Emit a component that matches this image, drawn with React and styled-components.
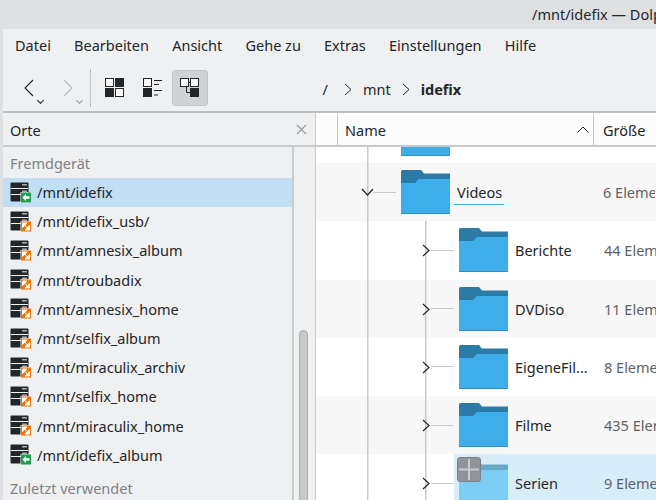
import React from "react";
import styled, { createGlobalStyle } from "styled-components";

const GlobalStyle = createGlobalStyle`
  html, body {
    margin: 0;
    padding: 0;
    width: 656px;
    height: 500px;
    overflow: hidden;
    background: #eff0f1;
    font-family: "Noto Sans", sans-serif;
    color: #232629;
  }
`;

const places = [
  { name: "/mnt/idefix", mounted: true, active: true },
  { name: "/mnt/idefix_usb/" },
  { name: "/mnt/amnesix_album" },
  { name: "/mnt/troubadix" },
  { name: "/mnt/amnesix_home" },
  { name: "/mnt/selfix_album" },
  { name: "/mnt/miraculix_archiv" },
  { name: "/mnt/selfix_home" },
  { name: "/mnt/miraculix_home" },
  { name: "/mnt/idefix_album", mounted: true },
];

const children = [
  { name: "Berichte", size: "44 Elemente" },
  { name: "DVDiso", size: "11 Elemente", alt: true },
  { name: "EigeneFil...", size: "8 Elemente" },
  { name: "Filme", size: "435 Elemente", alt: true },
  { name: "Serien", size: "9 Elemente", selected: true },
];

const menus = ["Datei", "Bearbeiten", "Ansicht", "Gehe zu", "Extras", "Einstellungen", "Hilfe"];

const FolderIcon = ({ light }) => (
  <FolderSvg viewBox="0 0 49 44">
    <path
      d="M1 0H20L23 3.5H49V20H0V1Z"
      fill={light ? "#6aa8c8" : "#2c7aa6"}
    />
    <path
      d="M0 13H14L18 9H49V43.5H0Z"
      fill={light ? "#7dcef5" : "#3daee9"}
    />
    <rect y="43" width="49" height="1" fill={light ? "#6cbde4" : "#2f8fc4"} />
  </FolderSvg>
);

const DeviceIcon = ({ mounted }) => (
  <svg width="21" height="21" viewBox="0 0 21 21">
    <rect x="0.5" y="0.5" width="18" height="19" rx="1" fill="#232629" />
    <rect x="1" y="6" width="17" height="1" fill="#eff0f1" />
    <rect x="1" y="12" width="17" height="1" fill="#eff0f1" />
    <rect x="12" y="2" width="5" height="1.5" fill="#a9abad" />
    <rect x="12" y="8.5" width="5" height="1.5" fill="#a9abad" />
    <rect x="10.5" y="10" width="10.5" height="11" fill="#eff0f1" />
    <rect x="11" y="10.5" width="10" height="10" fill={mounted ? "#1f9d55" : "#f67400"} />
    {mounted ? (
      <path d="M12.5 15.5L16 12V14.2H19.5V16.8H16V19Z" fill="#fff" />
    ) : (
      <path
        d="M12.5 12H17L12.5 16.5ZM19.5 19H15L19.5 14.5ZM14 13.5L18 17.5"
        fill="#fff"
        stroke="#fff"
        strokeWidth="1"
      />
    )}
  </svg>
);

const Chevron = ({ dir = "right", size = 10, color = "#232629" }) => {
  const d = {
    right: "M1 1L9 9L1 17",
    left: "M9 1L1 9L9 17",
  }[dir];
  return (
    <svg width={size} height={size * 1.8} viewBox="0 0 10 18" fill="none" stroke={color} strokeWidth="1.1">
      <path d={d} />
    </svg>
  );
};

const CrumbChevron = () => (
  <CrumbArrow>
    <svg width="8" height="13" viewBox="0 0 8 13" fill="none" stroke="#232629" strokeWidth="1">
      <path d="M1 1L7 6.5L1 12" />
    </svg>
  </CrumbArrow>
);

const TreeRow = ({ item }) => (
  <Row $alt={item.alt}>
    <Guide />
    <Guide $branch>
      <Expander>
        <svg width="8" height="13" viewBox="0 0 8 13" fill="none" stroke="#232629" strokeWidth="1.2">
          <path d="M1 1L7 6.5L1 12" />
        </svg>
      </Expander>
    </Guide>
    <Cell $selected={item.selected}>
      {item.selected && (
        <SelectToggle>
          <svg width="22" height="23" viewBox="0 0 22 23">
            <path d="M11 1V22M1 11.5H21" stroke="#c9ccd0" strokeWidth="2" />
          </svg>
        </SelectToggle>
      )}
      <FolderIcon light={item.selected} />
      <Label>{item.name}</Label>
      <Size>{item.size}</Size>
    </Cell>
  </Row>
);

export default function App() {
  return (
    <>
      <GlobalStyle />
      <Window>
        <TitleBar>
          <svg width="21" height="20" viewBox="0 0 21 20">
            <defs>
              <linearGradient id="appFolder" x1="0" y1="0" x2="0" y2="1">
                <stop offset="0" stopColor="#3daee9" />
                <stop offset="1" stopColor="#2a8ac2" />
              </linearGradient>
            </defs>
            <path d="M0 0.5H8L10 2H21V20H0Z" fill="#1f6f9e" />
            <rect x="1" y="3.5" width="13" height="3.5" fill="#fff" />
            <path d="M0 9H9L11 7H21V20H0Z" fill="url(#appFolder)" />
          </svg>
          <svg width="14" height="14" viewBox="0 0 14 14">
            <path d="M8.5 0.5L13.5 5.5L12.5 6.5L11.5 6L8.5 9L8.5 11.5L7 12.5L1.5 7L2.5 5.5L5 5.5L8 2.5L7.5 1.5Z" fill="#232629" />
            <path d="M4 9.5L0.5 13.5L4.5 10Z" fill="#232629" stroke="#232629" strokeWidth="0.8" />
          </svg>
          <Title>/mnt/idefix — Dolphin</Title>
        </TitleBar>
        <Frame>
          <MenuBar>
            {menus.map((m) => (
              <MenuItem key={m}>{m}</MenuItem>
            ))}
          </MenuBar>
          <Toolbar>
            <NavButton>
              <Chevron dir="left" />
              <DropMark />
            </NavButton>
            <NavButton $short>
              <Chevron dir="right" color="#b3b5b7" />
              <DropMark $off />
            </NavButton>
            <Separator />
            <ViewButton>
              <svg width="20" height="20" viewBox="0 0 20 20" fill="#232629" stroke="#232629" strokeWidth="1">
                <rect x="0.5" y="0.5" width="8" height="8" fill="#fcfcfc" />
                <rect x="10.5" y="0.5" width="8" height="8" />
                <rect x="0.5" y="10.5" width="8" height="8" />
                <rect x="10.5" y="10.5" width="8" height="8" fill="#fcfcfc" />
              </svg>
            </ViewButton>
            <ViewButton>
              <svg width="20" height="20" viewBox="0 0 20 20" fill="#232629" stroke="#232629" strokeWidth="1">
                <rect x="0.5" y="0.5" width="8" height="8" fill="#fcfcfc" />
                <rect x="0.5" y="10.5" width="8" height="8" />
                <path d="M11 2.5H19M11 6.5H16M11 12.5H19M11 17H15" fill="none" />
              </svg>
            </ViewButton>
            <ViewButton $active>
              <svg width="20" height="20" viewBox="0 0 20 20" fill="#232629" stroke="#232629" strokeWidth="1">
                <rect x="0.5" y="0.5" width="8" height="8" fill="#fcfcfc" />
                <rect x="10.5" y="0.5" width="8" height="8" fill="#fcfcfc" />
                <rect x="10.5" y="10.5" width="8" height="8" />
                <path d="M8.5 4.5H10.5M6.5 8.5V14.5H10.5" fill="none" />
              </svg>
            </ViewButton>
            <Breadcrumbs>
              <Crumb $root>/</Crumb>
              <CrumbChevron />
              <Crumb>mnt</Crumb>
              <CrumbChevron />
              <Crumb $bold>idefix</Crumb>
            </Breadcrumbs>
          </Toolbar>
          <Content>
            <Sidebar>
              <PanelHeader>
                <span>Orte</span>
                <svg width="11" height="11" viewBox="0 0 11 11" stroke="#9a9c9e" strokeWidth="1.1">
                  <path d="M1 1L10 10M10 1L1 10" />
                </svg>
              </PanelHeader>
              <PanelBody>
                <PlacesList>
                  <Group>Fremdgerät</Group>
                  {places.map((p) => (
                    <Place key={p.name} $active={p.active}>
                      <DeviceIcon mounted={p.mounted} />
                      <span>{p.name}</span>
                    </Place>
                  ))}
                  <Group $recent>Zuletzt verwendet</Group>
                </PlacesList>
                <ScrollTrack>
                  <ScrollThumb />
                </ScrollTrack>
              </PanelBody>
            </Sidebar>
            <Main>
              <ColumnHeader>
                <HeaderGap />
                <NameHead>
                  <span>Name</span>
                  <svg width="12" height="7" viewBox="0 0 12 7" fill="none" stroke="#232629" strokeWidth="1">
                    <path d="M0.5 6.5L6 1L11.5 6.5" />
                  </svg>
                </NameHead>
                <SizeHead>Größe</SizeHead>
              </ColumnHeader>
              <TopRow>
                <Guide />
                <FolderStub />
              </TopRow>
              <Row $alt>
                <Guide $branch>
                  <Expander $down>
                    <svg width="13" height="8" viewBox="0 0 13 8" fill="none" stroke="#232629" strokeWidth="1.2">
                      <path d="M1 1L6.5 7L12 1" />
                    </svg>
                  </Expander>
                </Guide>
                <Cell>
                  <FolderIcon />
                  <Label $current>Videos</Label>
                  <Size>6 Elemente</Size>
                </Cell>
              </Row>
              {children.map((c) => (
                <TreeRow key={c.name} item={c} />
              ))}
            </Main>
          </Content>
        </Frame>
      </Window>
    </>
  );
}

const Window = styled.div`
  width: 656px;
  height: 500px;
  overflow: hidden;
  display: flex;
  flex-direction: column;
  font-size: 14.5px;
`;

const TitleBar = styled.div`
  flex: 0 0 29px;
  background: #dee0e2;
  display: flex;
  align-items: center;
  gap: 11px;
  padding-left: 9px;
  white-space: nowrap;
  box-sizing: border-box;
  padding-bottom: 2px;
`;

const Title = styled.div`
  margin-left: 501px;
  font-size: 14.5px;
`;

const Frame = styled.div`
  flex: 1;
  min-height: 0;
  display: flex;
  flex-direction: column;
  border-left: 3px solid #dee0e2;
`;

const MenuBar = styled.div`
  flex: 0 0 33px;
  box-sizing: border-box;
  display: flex;
  align-items: center;
  gap: 23.2px;
  padding: 0 0 2px 12px;
  white-space: nowrap;
`;

const MenuItem = styled.div``;

const Toolbar = styled.div`
  flex: 0 0 51px;
  box-sizing: border-box;
  display: flex;
  align-items: center;
  border-bottom: 2px solid #bdbfc1;
  padding: 3px 0 0 21px;
`;

const NavButton = styled.div`
  width: ${(p) => (p.$short ? "27px" : "39px")};
  height: 36px;
  display: flex;
  align-items: center;
  position: relative;
`;

const DropMark = styled.div`
  position: absolute;
  left: 14px;
  bottom: 3px;
  width: 4px;
  height: 4px;
  border-right: 1px solid ${(p) => (p.$off ? "#9a9c9e" : "#232629")};
  border-bottom: 1px solid ${(p) => (p.$off ? "#9a9c9e" : "#232629")};
  transform: rotate(45deg);
`;

const Separator = styled.div`
  width: 1px;
  height: 38px;
  background: #bdbfc1;
  margin: 0 6px 0 0;
`;

const ViewButton = styled.div`
  width: 36px;
  height: 36px;
  box-sizing: border-box;
  margin-right: 1.5px;
  display: flex;
  align-items: center;
  justify-content: center;
  border-radius: 3px;
  background: ${(p) => (p.$active ? "#d1d2d4" : "transparent")};
  border: 1px solid ${(p) => (p.$active ? "#c3c5c7" : "transparent")};
`;

const Breadcrumbs = styled.div`
  display: flex;
  align-items: center;
  margin-left: 113px;
  padding-top: 2px;
  white-space: nowrap;
`;

const Crumb = styled.span`
  font-weight: ${(p) => (p.$bold ? 700 : 400)};
  margin-right: ${(p) => (p.$root ? "5px" : "0")};
`;

const CrumbArrow = styled.span`
  display: flex;
  margin: 0 11px;
`;

const Content = styled.div`
  flex: 1;
  min-height: 0;
  display: flex;
`;

const Sidebar = styled.div`
  flex: 0 0 313px;
  display: flex;
  flex-direction: column;
  border-right: 1px solid #c8cacc;
  box-sizing: border-box;
`;

const PanelHeader = styled.div`
  flex: 0 0 34px;
  box-sizing: border-box;
  display: flex;
  align-items: center;
  justify-content: space-between;
  padding: 1px 8px 0 7px;
  border-bottom: 2px solid #c8cacc;
`;

const PanelBody = styled.div`
  flex: 1;
  min-height: 0;
  display: flex;
`;

const PlacesList = styled.div`
  flex: 0 0 289px;
  padding-top: 3px;
`;

const Group = styled.div`
  height: 28px;
  box-sizing: border-box;
  display: flex;
  align-items: center;
  padding: 0 0 3px 7px;
  color: #7f8285;
  margin-top: ${(p) => (p.$recent ? "6px" : "0")};
`;

const Place = styled.div`
  height: 29.2px;
  box-sizing: border-box;
  display: flex;
  align-items: center;
  gap: 6px;
  padding: 0 0 1px 7px;
  background: ${(p) => (p.$active ? "#c0dff5" : "transparent")};
`;

const ScrollTrack = styled.div`
  flex: 1;
  border-left: 2px solid #c8cacc;
  padding: 183px 6px 0 5px;
`;

const ScrollThumb = styled.div`
  width: 9px;
  height: 200px;
  box-sizing: border-box;
  background: #c8c9c9;
  border: 1px solid #a9abad;
  border-radius: 5px 5px 0 0;
`;

const Main = styled.div`
  flex: 1;
  min-width: 0;
  background: #fff;
  display: flex;
  flex-direction: column;
`;

const ColumnHeader = styled.div`
  flex: 0 0 34px;
  box-sizing: border-box;
  display: flex;
  align-items: stretch;
  background: #fcfcfc;
  border-bottom: 2px solid #c8cacc;
  padding-top: 1px;
`;

const HeaderGap = styled.div`
  width: 21px;
`;

const NameHead = styled.div`
  width: 257px;
  box-sizing: border-box;
  display: flex;
  align-items: center;
  justify-content: space-between;
  padding: 0 4px 0 7px;
  border-left: 1px solid #c8cacc;
  border-right: 1px solid #c8cacc;
`;

const SizeHead = styled.div`
  display: flex;
  align-items: center;
  padding-left: 9px;
`;

const TopRow = styled.div`
  flex: 0 0 16px;
  display: flex;
`;

const FolderStub = styled.div`
  width: 49px;
  height: 9px;
  margin-left: 27px;
  background: #3daee9;
  border-bottom: 1px solid #2f8fc4;
  box-sizing: border-box;
`;

const Row = styled.div`
  flex: 0 0 58.25px;
  display: flex;
  background: ${(p) => (p.$alt ? "#f7f7f7" : "#fff")};
`;

const Guide = styled.div`
  flex: 0 0 ${(p) => (p.$branch ? "80px" : "58px")};
  position: relative;
  background-repeat: no-repeat;
  background-image: linear-gradient(#c8cacc, #c8cacc)
    ${(p) => (p.$branch ? ", linear-gradient(#c8cacc, #c8cacc)" : "")};
  background-size: 1.5px 100% ${(p) => (p.$branch ? ", 23px 1px" : "")};
  background-position: 50.5px 0 ${(p) => (p.$branch ? ", 57px 50%" : "")};
`;

const Expander = styled.div`
  position: absolute;
  left: ${(p) => (p.$down ? "44.5px" : "48px")};
  top: ${(p) => (p.$down ? "25px" : "23px")};
  display: flex;
`;

const Cell = styled.div`
  flex: 1;
  min-width: 0;
  display: flex;
  align-items: center;
  padding-left: 5px;
  position: relative;
  background: ${(p) => (p.$selected ? "#d8edfa" : "transparent")};
`;

const FolderSvg = styled.svg`
  flex: 0 0 49px;
  width: 49px;
  height: 44px;
`;

const Label = styled.div`
  flex: 1;
  white-space: nowrap;
  padding-left: 7px;
  ${(p) =>
    p.$current &&
    `
    flex: 0 0 50px;
    padding-left: 3px;
    margin-left: 4px;
    line-height: 23px;
    border-bottom: 1px solid #3daee9;
    box-sizing: border-box;
    margin-right: 99px;
    margin-top: 2px;
  `}
`;

const Size = styled.div`
  flex: 0 0 52px;
  overflow: hidden;
  white-space: nowrap;
  color: #5f6265;
`;

const SelectToggle = styled.div`
  position: absolute;
  left: 3px;
  top: 3px;
  width: 24px;
  height: 25px;
  box-sizing: border-box;
  display: flex;
  align-items: center;
  justify-content: center;
  z-index: 1;
  background: #8f9498;
  border: 1px solid #7c8186;
  border-radius: 3px;
  svg {
    flex: none;
  }
`;
